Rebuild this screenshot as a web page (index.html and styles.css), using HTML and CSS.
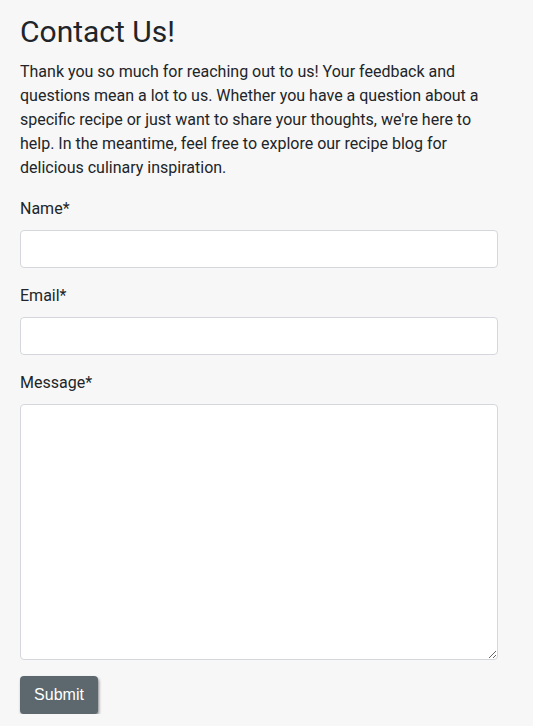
FILE: index.html
```html
<!DOCTYPE html>
<html lang="en">
<head>
<meta charset="utf-8">
<title>Contact Us</title>
<link rel="stylesheet" href="styles.css">
</head>
<body>
<main class="contact">
  <h1 class="contact-title">Contact Us!</h1>
  <p class="contact-intro">Thank you so much for reaching out to us! Your feedback and questions mean a lot to us. Whether you have a question about a specific recipe or just want to share your thoughts, we're here to help. In the meantime, feel free to explore our recipe blog for delicious culinary inspiration.</p>
  <form class="contact-form">
    <label class="field-label" for="name">Name*</label>
    <input class="field-input" id="name" type="text">
    <label class="field-label" for="email">Email*</label>
    <input class="field-input" id="email" type="email">
    <label class="field-label" for="message">Message*</label>
    <textarea class="field-textarea" id="message"></textarea>
    <button class="submit-btn" type="button">Submit</button>
  </form>
</main>
</body>
</html>
```

FILE: styles.css
```css
* { box-sizing: border-box; }
html, body {
  margin: 0;
  background: #f7f7f7;
}
body {
  font-family: Roboto, "Liberation Sans", sans-serif;
  color: #212529;
}
.contact {
  width: 518px;
  padding: 14px 20px 0 20px;
}
.contact-title {
  font-size: 30px;
  font-weight: 400;
  line-height: 36px;
  margin: 0 0 10px 0;
}
.contact-intro {
  font-size: 16px;
  line-height: 24px;
  margin: 0 0 17px 0;
  width: 478px;
}
.contact-form {
  display: flex;
  flex-direction: column;
  width: 478px;
}
.field-label {
  font-size: 16px;
  line-height: 24px;
  margin-bottom: 9px;
}
.field-input, .field-textarea {
  width: 478px;
  background: #fff;
  border: 1px solid #d4d7dc;
  border-radius: 4px;
  font: inherit;
}
.field-input {
  height: 38px;
  margin-bottom: 16px;
}
.field-textarea {
  height: 256px;
  margin-bottom: 16px;
  resize: vertical;
}
.submit-btn {
  align-self: flex-start;
  width: 78px;
  height: 38px;
  background: #5c676e;
  color: #fff;
  border: none;
  border-radius: 4px;
  font-family: "Liberation Sans", Arial, sans-serif;
  font-size: 16px;
  box-shadow: 1px 2px 3px rgba(0,0,0,0.45);
}
```
